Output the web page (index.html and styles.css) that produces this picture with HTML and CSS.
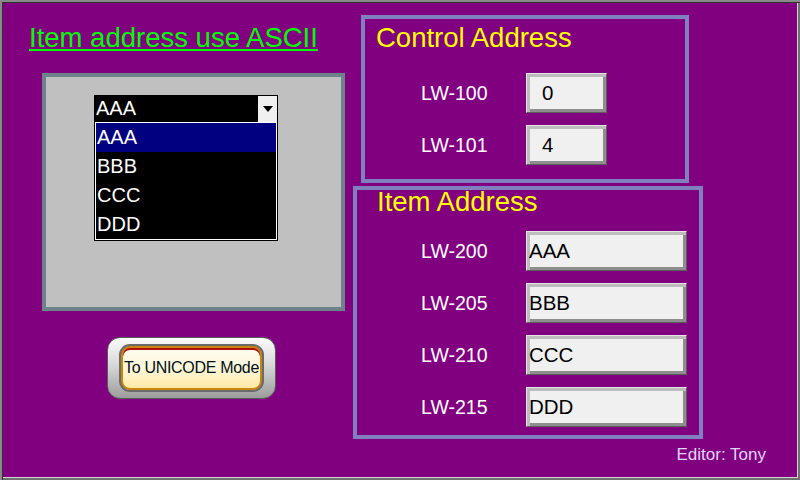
FILE: index.html
```html
<!DOCTYPE html>
<html>
<head>
<meta charset="utf-8">
<link rel="stylesheet" href="styles.css">
</head>
<body>
<div class="screen">
  <div class="left">
    <div class="heading">Item address use ASCII</div>
    <div class="panel">
      <div class="combo">
        <span class="combo-text">AAA</span>
        <span class="combo-btn"><svg width="10" height="6" viewBox="0 0 10 6"><polygon points="0,0 10,0 5,6" fill="#000"/></svg></span>
      </div>
      <div class="list">
        <div class="opt sel">AAA</div>
        <div class="opt">BBB</div>
        <div class="opt">CCC</div>
        <div class="opt">DDD</div>
      </div>
    </div>
    <div class="btn-shell">
      <div class="btn-face">To UNICODE Mode</div>
    </div>
  </div>
  <div class="right">
    <div class="box control">
      <div class="box-title">Control Address</div>
      <div class="rows">
        <div class="row"><span class="lbl">LW-100</span><span class="field num">0</span></div>
        <div class="row"><span class="lbl">LW-101</span><span class="field num">4</span></div>
      </div>
    </div>
    <div class="box items">
      <div class="box-title">Item Address</div>
      <div class="rows">
        <div class="row"><span class="lbl">LW-200</span><span class="field txt">AAA</span></div>
        <div class="row"><span class="lbl">LW-205</span><span class="field txt">BBB</span></div>
        <div class="row"><span class="lbl">LW-210</span><span class="field txt">CCC</span></div>
        <div class="row"><span class="lbl">LW-215</span><span class="field txt">DDD</span></div>
      </div>
    </div>
    <div class="editor">Editor: Tony</div>
  </div>
</div>
</body>
</html>
```
FILE: styles.css
```css
html, body {
  margin: 0;
  padding: 0;
  background: #800080;
}
.screen {
  width: 800px;
  height: 480px;
  box-sizing: border-box;
  background: #800080;
  display: flex;
  font-family: "Liberation Sans", Arial, sans-serif;
  box-shadow:
    inset 2px 2px 0 #8a8a8a,
    inset 3px 3px 0 #303030,
    inset -2px -2px 0 #707070,
    inset -3px -3px 0 #d4d4d4;
  overflow: hidden;
}
.left {
  width: 353px;
  flex: none;
}
.heading {
  display: inline-block;
  margin: 23px 0 0 29px;
  font-size: 27.5px;
  line-height: 30px;
  color: #00ff00;
  text-decoration: underline;
  text-decoration-thickness: 2px;
  text-underline-offset: 2px;
}
.panel {
  margin: 20px 0 0 42px;
  width: 303px;
  height: 238px;
  box-sizing: border-box;
  border: 4px solid #6e8389;
  background: #c0c0c0;
  padding: 18px 0 0 48px;
}
.combo {
  width: 184px;
  height: 27px;
  background: #000;
  display: flex;
  align-items: stretch;
  box-sizing: border-box;
  padding: 1px 1px 0 0;
}
.combo-text {
  flex: 1;
  color: #fff;
  font-size: 20px;
  line-height: 25px;
  padding-left: 2px;
}
.combo-btn {
  width: 19px;
  background: #f0f0f0;
  display: flex;
  align-items: center;
  justify-content: center;
}
.list {
  width: 184px;
  box-sizing: border-box;
  border: 1px solid #000;
  box-shadow: inset 0 0 0 1px #fff;
  padding: 1px;
  background: #000;
  margin-top: -1px;
  height: 120px;
  overflow: hidden;
}
.opt {
  height: 29px;
  line-height: 29px;
  color: #fff;
  font-size: 20px;
  padding-left: 1px;
}
.opt.sel {
  background: #000080;
}
.btn-shell {
  margin: 26px 0 0 107px;
  width: 169px;
  height: 62px;
  box-sizing: border-box;
  border: 1px solid #5a5a5a;
  border-radius: 13px;
  background: linear-gradient(#fbfbfb, #d8d8d8 45%, #9c9c9c);
  padding: 6px 11px 6px 11px;
}
.btn-face {
  height: 100%;
  box-sizing: border-box;
  border-radius: 11px;
  border: 2px solid #6a6a6a;
  background: linear-gradient(#fffdf2, #fff6d6 55%, #ffe7a0);
  box-shadow: inset 0 0 0 2px #c8860a, inset 0 2px 0 2px #b01010;
  display: flex;
  align-items: center;
  justify-content: center;
  font-size: 16px;
  color: #001018;
  white-space: nowrap;
  letter-spacing: -0.3px;
}
.right {
  flex: 1;
  display: flex;
  flex-direction: column;
  align-items: flex-start;
}
.box {
  border: 4px solid #8080c0;
  box-sizing: border-box;
}
.control {
  margin: 15px 0 0 8px;
  width: 328px;
  height: 168px;
  padding: 8px 0 0 11px;
}
.items {
  margin: 3px 0 0 0;
  width: 350px;
  height: 253px;
  padding: 1px 0 0 20px;
}
.box-title {
  font-size: 27.5px;
  line-height: 22px;
  color: #ffff00;
}
.rows {
  display: flex;
  flex-direction: column;
  gap: 12px;
}
.control .rows {
  margin-top: 24px;
  padding-left: 45px;
}
.items .rows {
  margin-top: 18px;
  padding-left: 44px;
}
.row {
  display: flex;
  align-items: center;
}
.lbl {
  width: 105px;
  flex: none;
  color: #ffffff;
  font-size: 19.5px;
}
.field {
  height: 40px;
  box-sizing: border-box;
  background: #f0f0f0;
  border: 1px solid;
  border-color: #e4e4e4 #5c5c5c #5c5c5c #e4e4e4;
  box-shadow: inset 3px 3px 0 #bdbdbd, inset -3px -3px 0 #8e8e8e;
  display: flex;
  align-items: center;
  color: #000;
  font-size: 20.5px;
}
.num {
  width: 81px;
  padding-left: 15px;
}
.txt {
  width: 161px;
  padding-left: 2px;
}
.editor {
  align-self: flex-end;
  margin: 6px 34px 0 0;
  font-size: 17px;
  color: #e2d4fa;
}
```
